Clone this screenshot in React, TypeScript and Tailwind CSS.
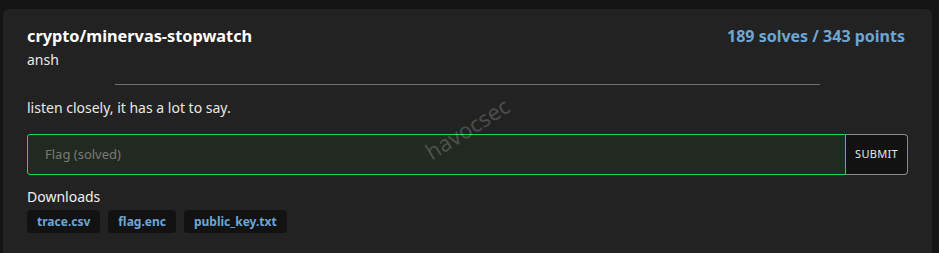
const files = ["trace.csv", "flag.enc", "public_key.txt"];

export default function App() {
  return (
    <div className="h-[253px] overflow-hidden bg-[#141414] pt-[9px] font-['Noto_Sans',sans-serif]">
      <div className="relative ml-[3px] w-[929px] h-[244px] rounded-t-md bg-[#222222] pl-[24px] pr-[24px] pt-[15px]">
        <div className="flex items-center justify-between">
          <h2 className="text-[16.3px] leading-[24px] font-bold text-white">crypto/minervas-stopwatch</h2>
          <span className="text-[16px] leading-[24px] font-bold text-[#6ea6d4] mr-[3px]">189 solves / 343 points</span>
        </div>
        <div className="mt-[2px] text-[14px] leading-[20px] text-[#e8e8e8]">ansh</div>
        <div className="mx-auto mt-[14px] h-px w-4/5 bg-[#707070]" />
        <p className="mt-[13px] text-[14px] leading-[20px] text-[#e8e8e8]">listen closely, it has a lot to say.</p>

        <div className="mt-[16px] flex h-[41px]">
          <div className="flex flex-1 items-center rounded-l-[3px] border border-[#1fd65a] bg-[#212921] pl-[17px]">
            <span className="text-[13px] text-[#7a7a7a]">Flag (solved)</span>
          </div>
          <button className="w-[62px] rounded-r-[4px] border border-l-0 border-[#8a8a8a] bg-[#121212] text-[11px] tracking-[0.3px] text-[#e8e8e8]">
            SUBMIT
          </button>
        </div>

        <div className="mt-[12px] text-[14px] leading-[20px] text-[#f0f0f0]">Downloads</div>
        <div className="mt-[3px] flex gap-[8px]">
          {files.map((f) => (
            <span
              key={f}
              className="flex h-[23px] items-center rounded-[4px] bg-[#121212] px-[10px] text-[12px] font-bold text-[#6ea6d4]"
            >
              {f}
            </span>
          ))}
        </div>

        <span className="pointer-events-none absolute left-[417px] top-[103px] -rotate-[32deg] text-[22px] text-white/20">
          havocsec
        </span>
      </div>
    </div>
  );
}
